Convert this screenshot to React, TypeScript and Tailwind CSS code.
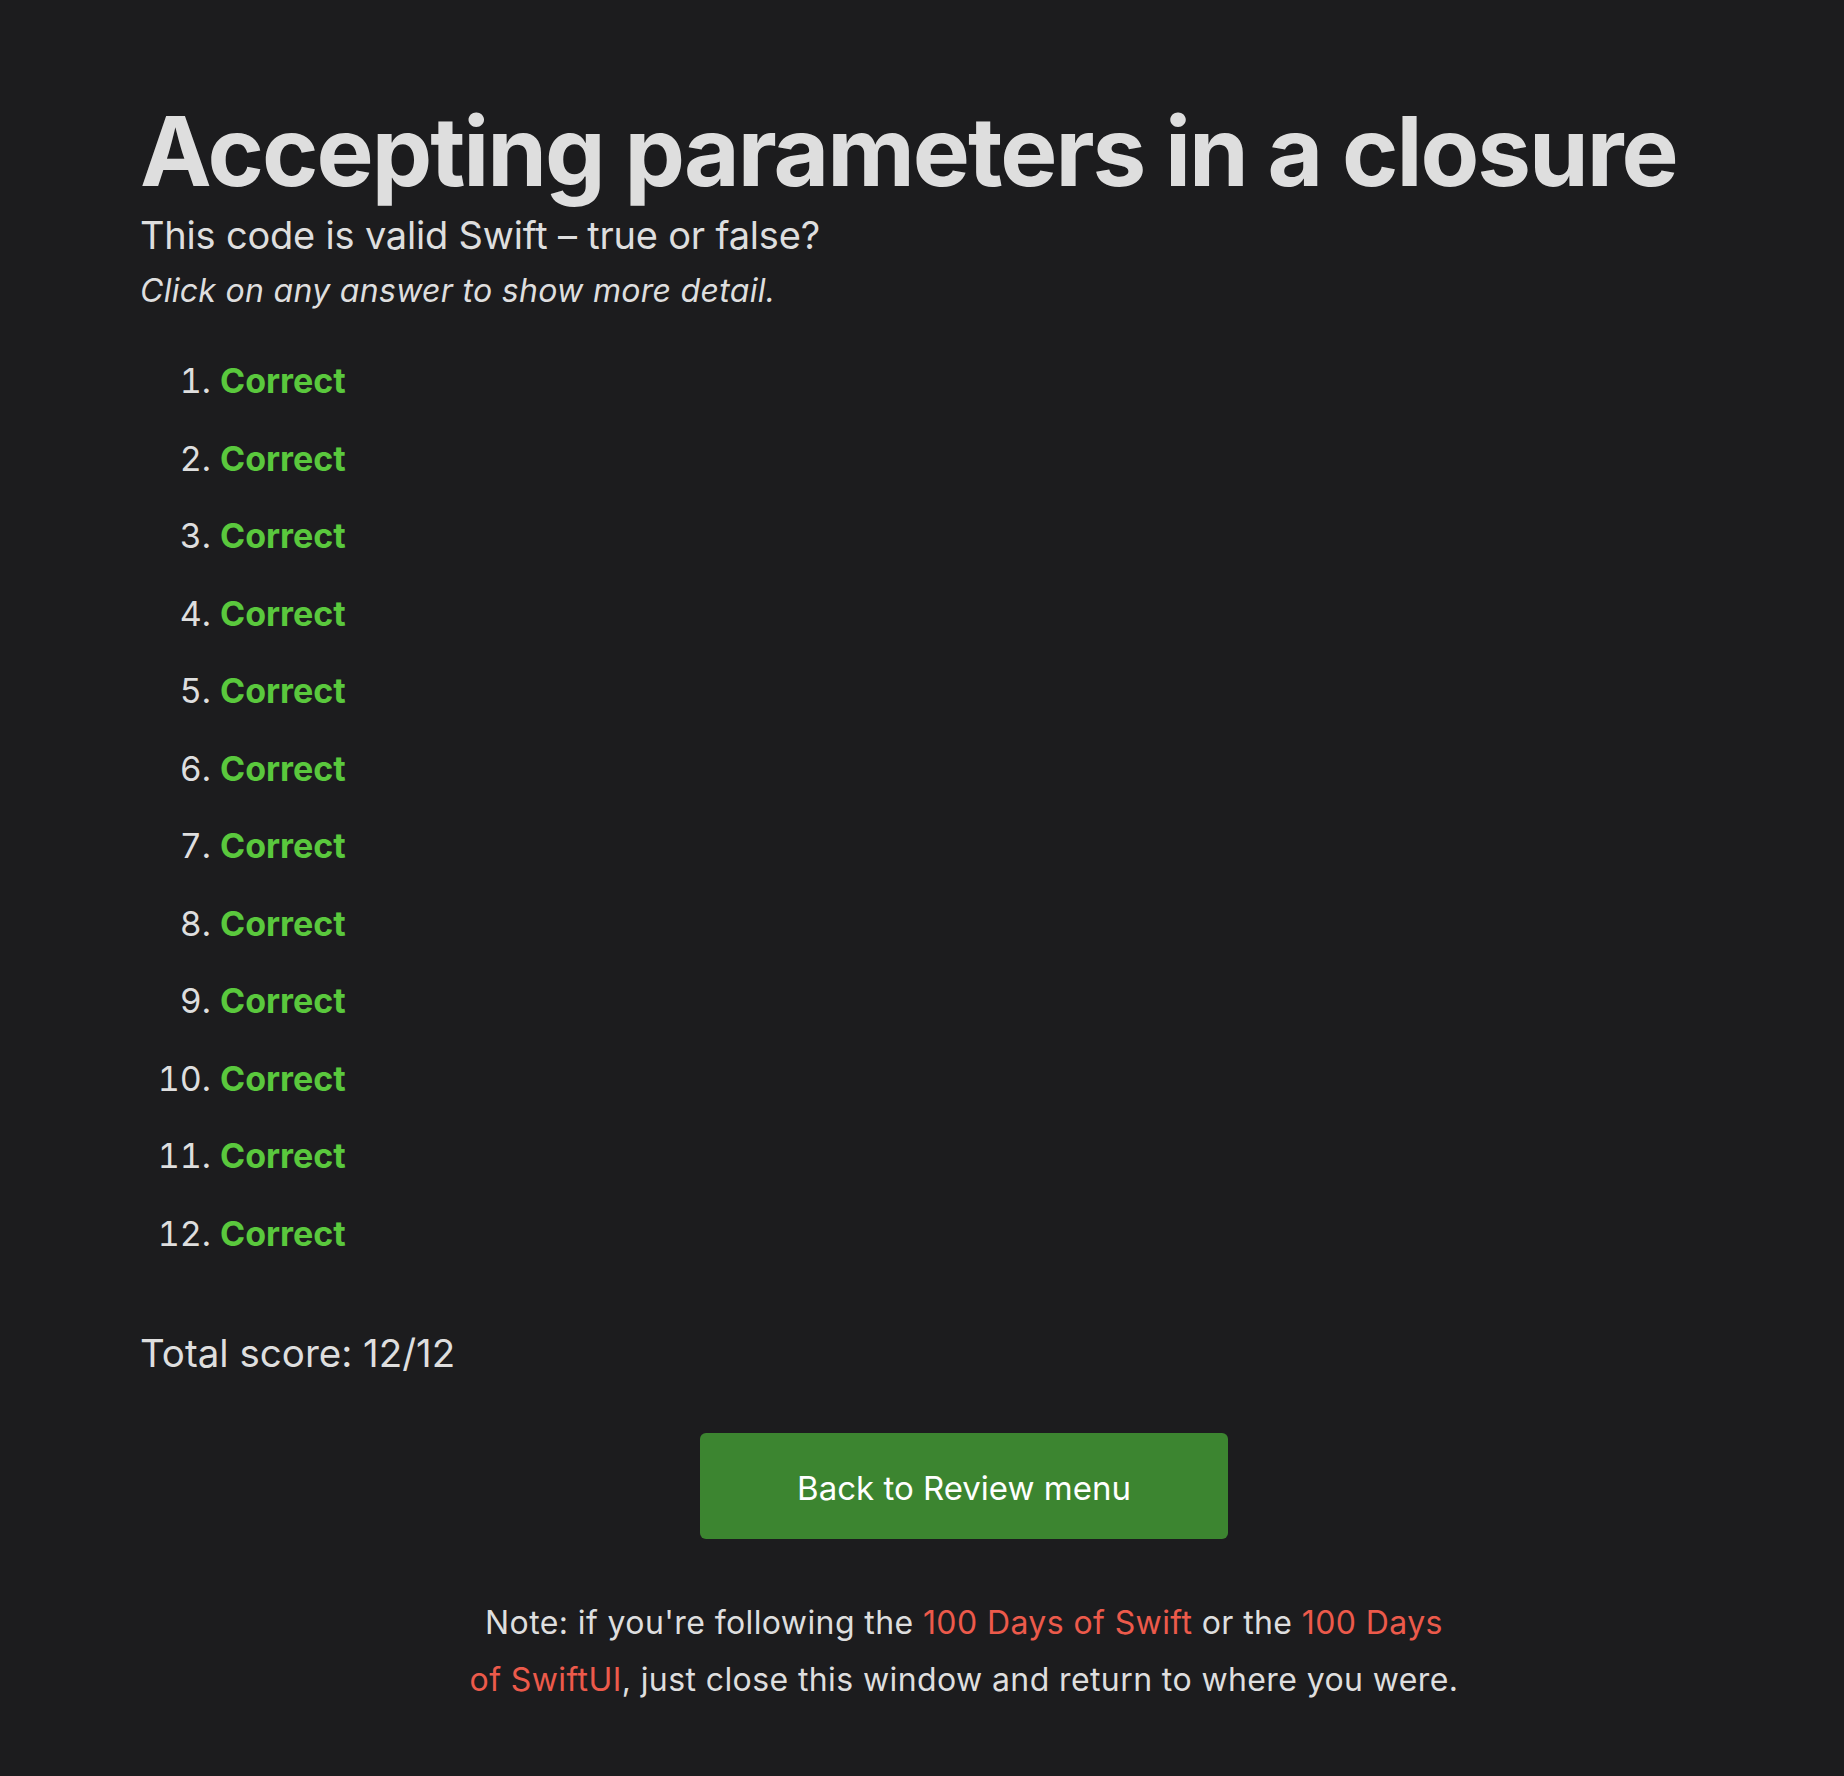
import React from 'react';

const answers = Array.from({ length: 12 }, (_, i) => i + 1);

const App: React.FC = () => {
  return (
    <div className="min-h-screen bg-[#1c1c1e] text-[#dedede] font-['Inter','Noto_Sans',sans-serif]">
      <div className="pl-[140px] pr-[56px] pt-[98px] pb-[80px]">
        {/* Heading */}
        <h1 className="text-[96px] leading-[106px] font-bold tracking-[-2px]">
          Accepting parameters in a closure
        </h1>
        <p className="mt-[8px] text-[38px] leading-[46px] tracking-[-0.2px]">This code is valid Swift – true or false?</p>
        <p className="mt-[13px] text-[32px] leading-[40px] italic tracking-[0.3px]">Click on any answer to show more detail.</p>

        {/* Answers */}
        <ol className="mt-[48px] list-decimal pl-[80px] flex flex-col gap-[33.5px]">
          {answers.map(n => (
            <li key={n} className="text-[34px] leading-[44px] text-[#dedede] cursor-pointer">
              <span className="font-bold text-[#5ac83d]">Correct</span>
            </li>
          ))}
        </ol>

        <p className="mt-[72px] text-[38.5px] leading-[50px]">Total score: 12/12</p>

        <div className="mt-[55px] flex justify-center">
          <button className="w-[528px] h-[106px] rounded-[6px] bg-[#3c8530] text-white text-[33px] leading-[106px] pt-[2px]">
            Back to Review menu
          </button>
        </div>

        <p className="mt-[55px] mx-auto w-[1040px] text-center text-[32px] leading-[57px] tracking-[0.4px] text-[#dedede]">
          Note: if you're following the <a className="text-[#ec5a4b]">100 Days of Swift</a> or the{' '}
          <a className="text-[#ec5a4b]">100 Days<br />of SwiftUI</a>, just close this window and return to where you were.
        </p>
      </div>
    </div>
  );
};

export default App;
